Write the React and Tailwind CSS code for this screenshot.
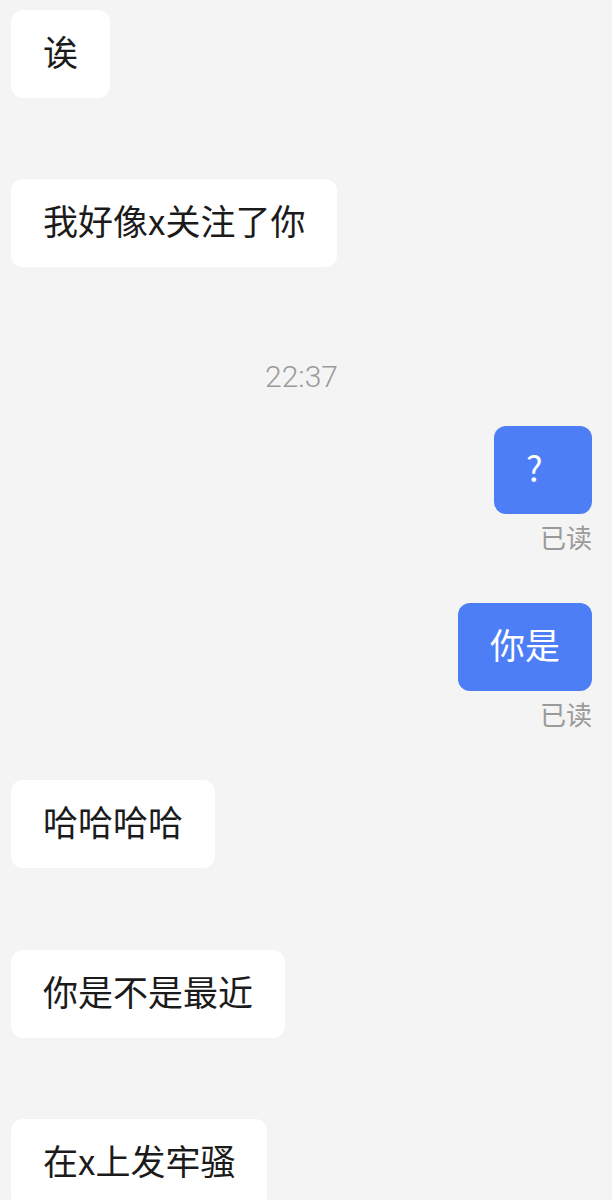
const font = { fontFamily: '"Noto Sans CJK SC", "Noto Sans", sans-serif' };

const Left = ({ text, className = "" }) => (
  <div className={`flex justify-start ${className}`}>
    <div className="bg-white rounded-[12px] px-[32px] pt-[19px] pb-[25px] text-[35px] leading-[44px] text-[#1b1b1b] min-w-[98px]">
      {text}
    </div>
  </div>
);

const Right = ({ text, className = "" }) => (
  <div className={`flex flex-col items-end ${className}`}>
    <div className="bg-[#4d7ef6] rounded-[12px] px-[32px] pt-[19px] pb-[25px] text-[35px] leading-[44px] text-white min-w-[98px]">
      {text}
    </div>
    <div className="mt-[8px] text-[26px] leading-[30px] text-[#9a9a9a]">已读</div>
  </div>
);

export default function App() {
  return (
    <div
      className="h-[1200px] overflow-hidden bg-[#f4f4f4] pl-[11px] pr-[20px] pt-[10px]"
      style={font}
    >
      <Left text="诶" />
      <Left text="我好像x关注了你" className="mt-[81px]" />
      <div className="mt-[89px] text-center text-[30px] leading-[36px] text-[#9a9a9a]">
        <span className="font-['Roboto'] font-light">22:37</span>
      </div>
      <Right text="?" className="mt-[31px]" />
      <Right text="你是" className="mt-[51px]" />
      <Left text="哈哈哈哈" className="mt-[51px]" />
      <Left text="你是不是最近" className="mt-[82px]" />
      <Left text="在x上发牢骚" className="mt-[81px]" />
    </div>
  );
}
